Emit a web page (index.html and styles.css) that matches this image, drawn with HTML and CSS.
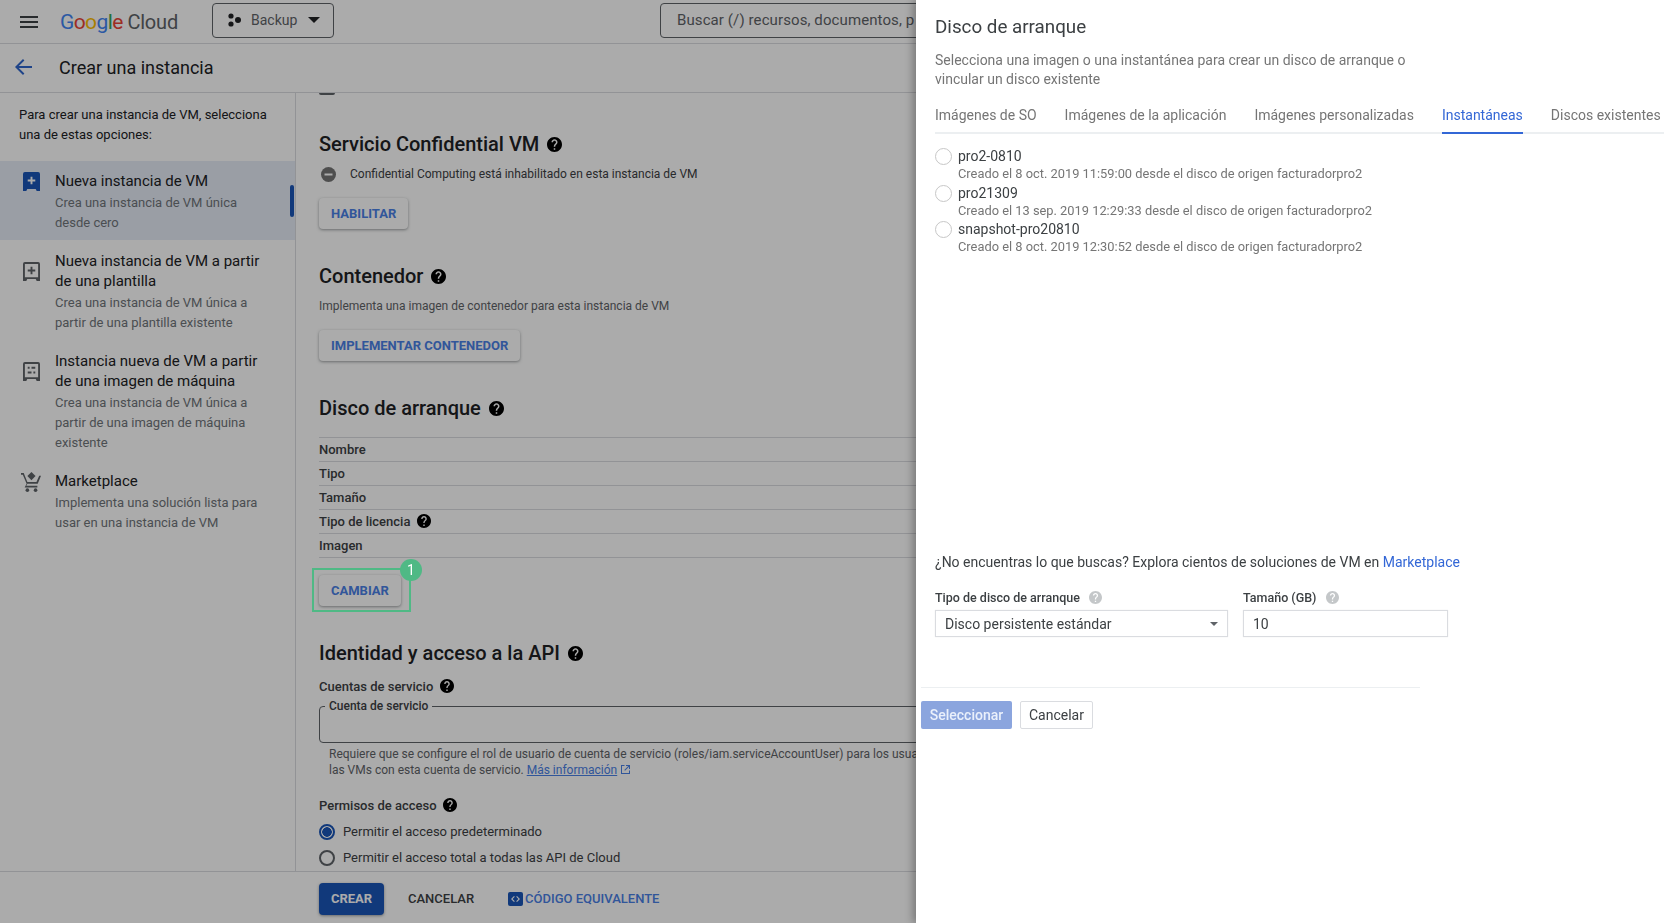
FILE: index.html
```html
<!DOCTYPE html>
<html lang="es">
<head>
    <meta charset="UTF-8">
    <meta name="viewport" content="width=device-width, initial-scale=1.0">
    <title>Crear una instancia</title>
    <link rel="stylesheet" href="styles.css">
</head>

<body>
    <svg class="defs" width="0" height="0">
        <symbol id="help" viewBox="2 2 20 20">
            <path d="M12 2C6.48 2 2 6.48 2 12s4.48 10 10 10 10-4.48 10-10S17.52 2 12 2zm1 17h-2v-2h2v2zm2.07-7.75l-.9.92C13.45 12.9 13 13.5 13 15h-2v-.5c0-1.1.45-2.1 1.17-2.83l1.24-1.26c.37-.36.59-.86.59-1.41 0-1.1-.9-2-2-2s-2 .9-2 2H8c0-2.21 1.79-4 4-4s4 1.79 4 4c0 .88-.36 1.68-.93 2.25z"/>
        </symbol>
    </svg>

    <div class="page">
        <header class="topbar">
            <svg class="menu-icon" width="18" height="12" viewBox="0 0 18 12"><path d="M0 0h18v2H0zM0 5h18v2H0zM0 10h18v2H0z"/></svg>
            <div class="logo">
                <span class="g-blue">G</span><span class="g-red">o</span><span class="g-yellow">o</span><span class="g-blue">g</span><span class="g-green">l</span><span class="g-red">e</span>
                <span class="logo-cloud">Cloud</span>
            </div>
            <div class="project">
                <svg width="16" height="14" viewBox="0 0 16 14"><circle cx="4" cy="3" r="2.6"/><circle cx="4" cy="11" r="2.6"/><circle cx="11" cy="7" r="3"/></svg>
                <span>Backup</span>
                <svg width="12" height="6" viewBox="0 0 12 6"><path d="M0 0h12L6 6z"/></svg>
            </div>
            <div class="search">Buscar (/) recursos, documentos, p</div>
        </header>

        <div class="subbar">
            <svg class="back" width="17" height="16" viewBox="0 0 17 16"><path d="M17 7H3.8l5.6-5.6L8 0 0 8l8 8 1.4-1.4L3.8 9H17z"/></svg>
            <h1>Crear una instancia</h1>
        </div>

        <div class="middle">
            <aside class="sidebar">
                <p class="intro">Para crear una instancia de VM, selecciona una de estas opciones:</p>

                <div class="option selected">
                    <svg class="option-icon" width="17" height="19" viewBox="0 0 18 20"><path class="blue-fill" d="M2 0h14a2 2 0 0 1 2 2v18h-3.5l-1-2h-9l-1 2H0V2a2 2 0 0 1 2-2z"/><path fill="#fff" d="M8 5h2v3h3v2h-3v3H8v-3H5V8h3z"/></svg>
                    <div>
                        <div class="option-title">Nueva instancia de VM</div>
                        <div class="option-desc">Crea una instancia de VM única desde cero</div>
                    </div>
                </div>

                <div class="option">
                    <svg class="option-icon two-line" width="17" height="19" viewBox="0 0 18 20"><path d="M2 0h14a2 2 0 0 1 2 2v18h-3.5l-1-2h-9l-1 2H0V2a2 2 0 0 1 2-2zm0 2v14h14V2z"/><path d="M8 5h2v3h3v2h-3v3H8v-3H5V8h3z"/></svg>
                    <div>
                        <div class="option-title">Nueva instancia de VM a partir de una plantilla</div>
                        <div class="option-desc">Crea una instancia de VM única a partir de una plantilla existente</div>
                    </div>
                </div>

                <div class="option">
                    <svg class="option-icon two-line" width="17" height="19" viewBox="0 0 18 20"><path d="M2 0h14a2 2 0 0 1 2 2v18h-3.5l-1-2h-9l-1 2H0V2a2 2 0 0 1 2-2zm0 2v14h14V2z"/><path d="M5 5h2v2H5zM9 5h4v2H9zM5 10h4v2H5zM11 10h2v2h-2z"/></svg>
                    <div>
                        <div class="option-title">Instancia nueva de VM a partir de una imagen de máquina</div>
                        <div class="option-desc">Crea una instancia de VM única a partir de una imagen de máquina existente</div>
                    </div>
                </div>

                <div class="option">
                    <svg class="option-icon cart" width="20" height="20" viewBox="0 0 22 22"><path d="M0 1h3l4 10h10l3-7h2l-3.6 9H7l-1.2 2H18v2H4l2.2-4L2 3H0z"/><circle cx="7" cy="20" r="2"/><circle cx="16" cy="20" r="2"/><path d="M11.5 0l4.500 4.500-4.500 4.500L7 4.500z"/></svg>
                    <div>
                        <div class="option-title">Marketplace</div>
                        <div class="option-desc">Implementa una solución lista para usar en una instancia de VM</div>
                    </div>
                </div>
                <div class="selected-bar"></div>
            </aside>

            <main class="content">
                <div class="cut-check"></div>

                <h2 class="heading first">Servicio Confidential VM <svg class="help"><use href="#help"/></svg></h2>
                <div class="status-row">
                    <svg width="15" height="15" viewBox="0 0 15 15"><circle cx="7.5" cy="7.5" r="7.5" fill="#757575"/><path fill="#fff" d="M3.5 6.5h8v2h-8z"/></svg>
                    <span>Confidential Computing está inhabilitado en esta instancia de VM</span>
                </div>
                <button class="btn-raised">HABILITAR</button>

                <h2 class="heading">Contenedor <svg class="help"><use href="#help"/></svg></h2>
                <p class="section-desc">Implementa una imagen de contenedor para esta instancia de VM</p>
                <button class="btn-raised">IMPLEMENTAR CONTENEDOR</button>

                <h2 class="heading">Disco de arranque <svg class="help"><use href="#help"/></svg></h2>
                <div class="disk-table">
                    <div class="disk-row">Nombre</div>
                    <div class="disk-row">Tipo</div>
                    <div class="disk-row">Tamaño</div>
                    <div class="disk-row">Tipo de licencia <svg class="help small"><use href="#help"/></svg></div>
                    <div class="disk-row">Imagen</div>
                </div>
                <div class="change-wrap">
                    <button class="btn-raised change">CAMBIAR</button>
                    <div class="mark-box"></div>
                    <div class="mark-badge">1</div>
                </div>

                <h2 class="heading">Identidad y acceso a la API <svg class="help"><use href="#help"/></svg></h2>
                <div class="field-label service">Cuentas de servicio <svg class="help small"><use href="#help"/></svg></div>
                <fieldset class="outline-field">
                    <legend>Cuenta de servicio</legend>
                </fieldset>
                <p class="hint">Requiere que se configure el rol de usuario de cuenta de servicio (roles/iam.serviceAccountUser) para los usuarios que quieran acceder a<br>
                    las VMs con esta cuenta de servicio. <a href="#">Más información</a>
                    <svg class="ext" width="11" height="11" viewBox="0 0 11 11"><path d="M1 1h3.500v1H2v7h7V6.500h1V10H1zM6 1h4v4H9V2.700L5 6.700 4.300 6l4-4H6z"/></svg>
                </p>
                <div class="field-label access">Permisos de acceso <svg class="help small"><use href="#help"/></svg></div>
                <div class="radio-row"><span class="radio on"></span>Permitir el acceso predeterminado</div>
                <div class="radio-row"><span class="radio"></span>Permitir el acceso total a todas las API de Cloud</div>
            </main>
        </div>

        <footer class="actions">
            <button class="btn-create">CREAR</button>
            <span class="btn-cancel">CANCELAR</span>
            <span class="btn-code">
                <svg width="15" height="14" viewBox="0 0 15 14"><rect width="15" height="14" rx="2" fill="#1a56b8"/><path fill="#fff" d="M6 4L3 7l3 3 .8-.8L4.600 7l2.200-2.200zM9 4l-.8.8L10.400 7 8.200 9.200 9 10l3-3z"/></svg>
                CÓDIGO EQUIVALENTE
            </span>
        </footer>
    </div>

    <div class="scrim"></div>

    <section class="panel">
        <h2 class="panel-title">Disco de arranque</h2>
        <p class="panel-desc">Selecciona una imagen o una instantánea para crear un disco de arranque o<br>vincular un disco existente</p>

        <div class="tabs">
            <span class="tab">Imágenes de SO</span>
            <span class="tab">Imágenes de la aplicación</span>
            <span class="tab">Imágenes personalizadas</span>
            <span class="tab active">Instantáneas</span>
            <span class="tab">Discos existentes</span>
        </div>

        <div class="snapshots">
            <div class="snapshot">
                <span class="snap-radio"></span>
                <div>
                    <div class="snap-name">pro2-0810</div>
                    <div class="snap-info">Creado el 8 oct. 2019 11:59:00 desde el disco de origen facturadorpro2</div>
                </div>
            </div>
            <div class="snapshot">
                <span class="snap-radio"></span>
                <div>
                    <div class="snap-name">pro21309</div>
                    <div class="snap-info">Creado el 13 sep. 2019 12:29:33 desde el disco de origen facturadorpro2</div>
                </div>
            </div>
            <div class="snapshot">
                <span class="snap-radio"></span>
                <div>
                    <div class="snap-name">snapshot-pro20810</div>
                    <div class="snap-info">Creado el 8 oct. 2019 12:30:52 desde el disco de origen facturadorpro2</div>
                </div>
            </div>
        </div>

        <p class="panel-market">¿No encuentras lo que buscas? Explora cientos de soluciones de VM en <a href="#">Marketplace</a></p>

        <div class="disk-form">
            <div class="form-col type-col">
                <label>Tipo de disco de arranque <svg class="help faint"><use href="#help"/></svg></label>
                <div class="select-box">
                    <span>Disco persistente estándar</span>
                    <svg width="8" height="4" viewBox="0 0 8 4"><path d="M0 0h8L4 4z"/></svg>
                </div>
            </div>
            <div class="form-col size-col">
                <label>Tamaño (GB) <svg class="help faint"><use href="#help"/></svg></label>
                <div class="select-box">10</div>
            </div>
        </div>

        <div class="panel-actions">
            <button class="btn-select">Seleccionar</button>
            <button class="btn-plain">Cancelar</button>
        </div>
    </section>
</body>
</html>
```

FILE: styles.css
```css
* {
    box-sizing: border-box;
}

body {
    margin: 0;
    height: 923px;
    overflow: hidden;
    background-color: #fff;
    color: #202124;
    font-family: Roboto, "Liberation Sans", sans-serif;
    position: relative;
}

.defs {
    position: absolute;
}

.page {
    height: 923px;
    display: flex;
    flex-direction: column;
}

/* top bar */
.topbar {
    height: 44px;
    flex: none;
    display: flex;
    align-items: center;
    border-bottom: 1px solid #dadce0;
    padding-left: 20px;
}

.menu-icon {
    fill: #3c4043;
    margin-right: 22px;
}

.logo {
    width: 152px;
    font-size: 21px;
    letter-spacing: -0.6px;
    white-space: nowrap;
}

.logo-cloud {
    color: #5f6368;
    font-size: 20px;
    letter-spacing: -0.2px;
}

.g-blue { color: #4285f4; }
.g-red { color: #ea4335; }
.g-yellow { color: #fbbc04; }
.g-green { color: #34a853; }

.project {
    width: 122px;
    height: 35px;
    margin-bottom: 3px;
    border: 1px solid #5f6368;
    border-radius: 4px;
    display: flex;
    align-items: center;
    padding-left: 14px;
    font-size: 14px;
    color: #5f6368;
}

.project svg {
    fill: #202124;
}

.project span {
    margin: 0 11px 0 8px;
}

.search {
    width: 400px;
    height: 35px;
    margin: 0 0 3px 326px;
    border: 1px solid #5f6368;
    border-radius: 4px;
    padding: 0 16px;
    font-size: 15px;
    line-height: 33px;
    letter-spacing: 0.1px;
    color: #5f6368;
    white-space: nowrap;
    overflow: hidden;
}

/* title bar */
.subbar {
    height: 49px;
    flex: none;
    display: flex;
    align-items: center;
    padding: 0 0 2px 15px;
    border-bottom: 1px solid #dadce0;
}

.back {
    fill: #2f66cc;
}

.subbar h1 {
    margin: 0 0 0 27px;
    font-size: 18px;
    font-weight: 400;
}

.middle {
    flex: 1;
    min-height: 0;
    display: flex;
}

/* left column */
.sidebar {
    width: 296px;
    flex: none;
    border-right: 1px solid #dadce0;
    position: relative;
}

.intro {
    margin: 0;
    padding: 12px 18px 16px 19px;
    font-size: 13px;
    line-height: 20px;
}

.option {
    display: flex;
    padding: 9px 26px 0 0;
    margin-bottom: 9px;
}

.option.selected {
    background-color: #e6ecf7;
    margin-bottom: 0;
    padding-top: 10px;
    height: 79px;
}

.option.selected + .option {
    padding-top: 11px;
}

.option-icon {
    flex: none;
    margin: 1px 15px 0 23px;
    fill: #5f6368;
}

.option-icon.two-line {
    margin-top: 11px;
}

.option-icon.cart {
    margin: 1px 14px 0 21px;
}

.blue-fill {
    fill: #1a56b8;
}

.option-title {
    font-size: 15px;
    line-height: 20px;
    margin-bottom: 2px;
}

.option-desc {
    font-size: 13px;
    line-height: 20px;
    color: #70757a;
}

.selected-bar {
    position: absolute;
    left: 290px;
    top: 92px;
    width: 4px;
    height: 32px;
    border-radius: 2px;
    background-color: #1a56b8;
}

/* main column */
.content {
    flex: 1;
    min-width: 0;
    overflow: hidden;
    padding-left: 23px;
    white-space: nowrap;
}

.cut-check {
    width: 16px;
    height: 16px;
    margin-top: -14px;
    border: 2px solid #5f6368;
    border-radius: 2px;
}

.heading {
    margin: 33px 0 0;
    font-size: 20px;
    font-weight: 500;
    line-height: 28px;
    display: flex;
    align-items: center;
}

.heading.first {
    margin-top: 35px;
}

.help {
    width: 15px;
    height: 15px;
    margin-left: 8px;
    fill: #000;
    flex: none;
}

.help.small {
    width: 14px;
    height: 14px;
    vertical-align: -2px;
    margin-left: 3px;
}

.help.faint {
    width: 13px;
    height: 13px;
    fill: #c4c7c9;
    vertical-align: -2px;
    margin-left: 6px;
}

.status-row {
    margin-top: 6px;
    height: 20px;
    display: flex;
    align-items: center;
    gap: 14px;
    font-size: 12px;
    color: #3c4043;
    padding-left: 2px;
}

.btn-raised {
    display: block;
    height: 31px;
    margin-top: 14px;
    padding: 0 12px;
    border: 0;
    border-radius: 4px;
    background-color: #fff;
    box-shadow: 0 1px 3px rgba(60, 64, 67, 0.5);
    color: #4a80e6;
    font-family: inherit;
    font-size: 13px;
    font-weight: 700;
}

.section-desc {
    margin: 6px 0 0;
    font-size: 12px;
    line-height: 20px;
    color: #5f6368;
}

.disk-table {
    margin-top: 15px;
    border-top: 1px solid #dadce0;
}

.disk-row {
    height: 24px;
    border-bottom: 1px solid #dadce0;
    font-size: 13px;
    font-weight: 500;
    line-height: 23px;
    color: #3c4043;
}

.change-wrap {
    position: relative;
    height: 31px;
    margin-top: 17px;
}

.btn-raised.change {
    margin-top: 0;
}

.mark-box {
    position: absolute;
    z-index: 6;
    left: -7px;
    top: -7px;
    width: 99px;
    height: 44px;
    border: 2px solid #4fb985;
}

.mark-badge {
    position: absolute;
    z-index: 6;
    left: 81px;
    top: -16px;
    width: 22px;
    height: 22px;
    border-radius: 50%;
    background-color: #4fb985;
    color: #fff;
    font-size: 14px;
    line-height: 22px;
    text-align: center;
}

.field-label {
    font-size: 13px;
    font-weight: 500;
    line-height: 20px;
    color: #3c4043;
}

.field-label.service {
    margin-top: 10px;
}

.field-label.access {
    margin-top: 18px;
}

.outline-field {
    height: 43px;
    margin: 3px 0 0;
    padding: 0;
    border: 1px solid #5f6368;
    border-radius: 4px;
}

.outline-field legend {
    margin-left: 5px;
    padding: 0 4px;
    font-size: 12px;
    font-weight: 500;
    line-height: 12px;
    color: #3c4043;
}

.hint {
    margin: 3px 0 0;
    padding-left: 10px;
    font-size: 12px;
    line-height: 16px;
    color: #5f6368;
}

.hint a {
    color: #4a80e6;
}

.ext {
    fill: #4a80e6;
    vertical-align: -1px;
}

.radio-row {
    height: 21px;
    margin-top: 5px;
    display: flex;
    align-items: center;
    gap: 8px;
    font-size: 13px;
    color: #3c4043;
}

.radio {
    width: 16px;
    height: 16px;
    border: 2px solid #5f6368;
    border-radius: 50%;
}

.radio.on {
    border-color: #1a56b8;
    background: radial-gradient(circle, #1a56b8 0 4.5px, transparent 5px);
}

/* bottom bar */
.actions {
    height: 52px;
    flex: none;
    border-top: 1px solid #dadce0;
    padding: 2px 0 0 319px;
    display: flex;
    align-items: center;
    font-size: 13px;
    font-weight: 500;
    white-space: nowrap;
}

.btn-create {
    width: 65px;
    height: 32px;
    border: 0;
    border-radius: 4px;
    background-color: #1a56b8;
    box-shadow: 0 1px 3px rgba(60, 64, 67, 0.5);
    color: #fff;
    font-family: inherit;
    font-size: 13px;
    font-weight: 700;
}

.btn-cancel {
    margin-left: 24px;
    color: #3c4043;
}

.btn-code {
    margin-left: 34px;
    color: #4a80e6;
    display: flex;
    align-items: center;
    gap: 2px;
}

/* dimmed layer under the panel */
.scrim {
    position: absolute;
    z-index: 5;
    inset: 0;
    background-color: rgba(0, 0, 0, 0.33);
    backdrop-filter: blur(0.5px);
}

/* right panel */
.panel {
    position: absolute;
    z-index: 10;
    top: 0;
    right: 0;
    bottom: 0;
    width: 748px;
    background-color: #fff;
    box-shadow: -3px 0 8px rgba(0, 0, 0, 0.3);
    display: flex;
    flex-direction: column;
    overflow: hidden;
    padding-left: 19px;
    white-space: nowrap;
    filter: blur(0.4px);
}

.panel-title {
    margin: 14px 0 0;
    font-size: 18.800px;
    font-weight: 400;
    line-height: 26px;
    color: #3c4043;
}

.panel-desc {
    margin: 11px 0 0;
    font-size: 14px;
    line-height: 19px;
    color: #757575;
}

.tabs {
    margin-top: 13px;
    height: 32px;
    flex: none;
    display: flex;
    gap: 28px;
    border-bottom: 2px solid #eceff1;
    font-size: 14px;
    line-height: 26px;
    color: #757575;
}

.tab {
    height: 32px;
}

.tab.active {
    color: #3367d6;
    border-bottom: 2px solid #3367d6;
}

.snapshots {
    margin-top: 13px;
    flex: none;
    height: 405px;
}

.snapshot {
    display: flex;
    height: 36.700px;
}

.snap-radio {
    width: 17px;
    height: 17px;
    flex: none;
    margin: 1px 6px 0 0;
    border: 1px solid #c7c7c7;
    border-radius: 50%;
}

.snap-name {
    font-size: 14px;
    line-height: 18px;
    color: #3c4043;
}

.snap-info {
    font-size: 12.850px;
    line-height: 17px;
    color: #757575;
}

.panel-market {
    margin: 0;
    font-size: 14px;
    line-height: 20px;
    color: #3c4043;
}

.panel-market a {
    color: #3367d6;
    text-decoration: none;
}

.disk-form {
    display: flex;
    gap: 15px;
    margin-top: 16px;
}

.form-col label {
    display: block;
    font-size: 12.500px;
    font-weight: 500;
    line-height: 20px;
    color: #3c4043;
}

.type-col {
    width: 293px;
}

.size-col {
    width: 205px;
}

.select-box {
    height: 27px;
    margin-top: 2px;
    padding: 0 9px;
    display: flex;
    align-items: center;
    justify-content: space-between;
    border: 1px solid #dadce0;
    box-shadow: 0 0 1px rgba(0, 0, 0, 0.1);
    font-size: 14px;
    color: #3c4043;
}

.select-box svg {
    fill: #5f6368;
}

.panel-actions {
    margin: 50px 244px 0 -14px;
    padding-top: 13px;
    border-top: 1px solid #eceff1;
    display: flex;
    gap: 8px;
}

.btn-select,
.btn-plain {
    height: 28px;
    border-radius: 2px;
    font-family: inherit;
    font-size: 14px;
}

.btn-select {
    width: 91px;
    border: 0;
    background-color: #8ba5de;
    color: #eaf0fb;
    font-weight: 500;
}

.btn-plain {
    width: 73px;
    border: 1px solid #dadce0;
    background-color: #fff;
    color: #3c4043;
}
```
